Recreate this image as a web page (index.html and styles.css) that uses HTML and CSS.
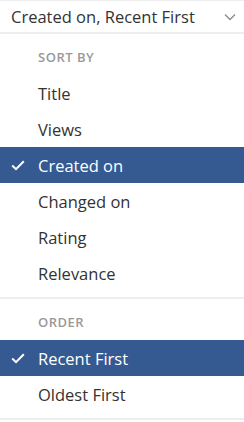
FILE: index.html
```html
<!DOCTYPE html>
<html>
<head>
<meta charset="utf-8">
<link rel="stylesheet" href="styles.css">
</head>
<body>
<div class="dropdown">
  <div class="toggle">
    <span class="toggle-text">Created on, Recent First</span>
    <svg class="chevron" width="12" height="8" viewBox="0 0 12 8"><path d="M1 1.5 L6 6.5 L11 1.5" fill="none" stroke="#8a8a8a" stroke-width="1.3"/></svg>
  </div>
  <div class="menu">
    <div class="section">
      <div class="label">SORT BY</div>
      <div class="item">Title</div>
      <div class="item">Views</div>
      <div class="item active"><svg class="check" width="14" height="11" viewBox="0 0 14 11"><path d="M1.2 5.6 L5 9.2 L12.8 1.2" fill="none" stroke="#fff" stroke-width="2"/></svg>Created on</div>
      <div class="item">Changed on</div>
      <div class="item">Rating</div>
      <div class="item">Relevance</div>
    </div>
    <div class="section">
      <div class="label">ORDER</div>
      <div class="item active"><svg class="check" width="14" height="11" viewBox="0 0 14 11"><path d="M1.2 5.6 L5 9.2 L12.8 1.2" fill="none" stroke="#fff" stroke-width="2"/></svg>Recent First</div>
      <div class="item">Oldest First</div>
    </div>
  </div>
</div>
</body>
</html>
```
FILE: styles.css
```css
html, body {
  margin: 0;
  padding: 0;
  background: #fff;
}
body {
  font-family: "Open Sans", "Liberation Sans", sans-serif;
  color: #333;
}
.dropdown {
  width: 244px;
}
.toggle {
  border-top: 1px solid #eeeeee;
  border-bottom: 2px solid #eeeeee;
  height: 31px;
  display: flex;
  align-items: center;
  justify-content: space-between;
  padding: 0 4px 0 11px;
  box-sizing: content-box;
}
.toggle-text {
  font-size: 16.5px;
  line-height: 22px;
  color: #333;
}
.chevron {
  margin-right: 4px;
}
.section {
  padding-bottom: 6px;
  border-bottom: 2px solid #eeeeee;
}
.label {
  font-size: 13px;
  font-weight: 600;
  letter-spacing: 0.5px;
  color: #999;
  line-height: 19px;
  padding: 14px 0 8px 38px;
}
.item {
  position: relative;
  height: 36px;
  display: flex;
  align-items: center;
  padding-left: 38px;
  font-size: 16.5px;
  color: #333;
}
.item.active {
  background: #355a91;
  color: #fff;
}
.check {
  position: absolute;
  left: 11px;
  top: 13px;
}
```
